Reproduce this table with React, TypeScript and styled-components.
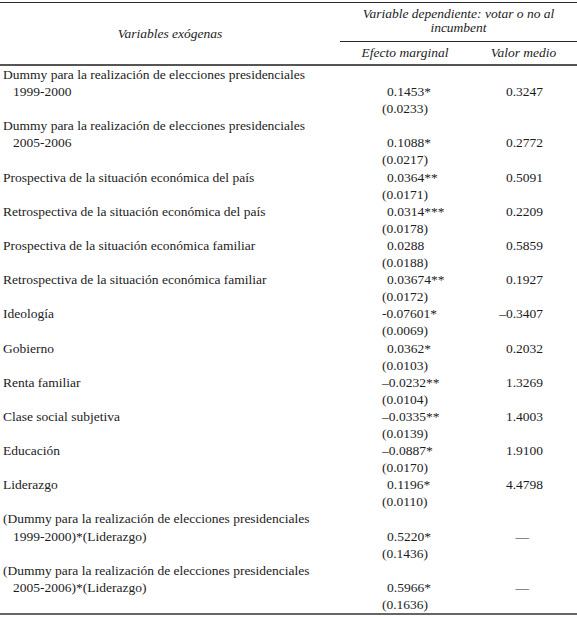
import React from 'react'
import styled, { createGlobalStyle } from 'styled-components'

const GlobalStyle = createGlobalStyle`
    html, body {
        margin:0;
        padding:0;
        background:#fff;
    }
    body {
        font-family:"Liberation Serif", "Times New Roman", serif;
        color:#1c1c1c;
    }
`

const Table = styled.div`
    width:577px;
    padding-top:2px;
    font-size:13.5px;
`

const Head = styled.div`
    display:grid;
    grid-template-columns:340px 130px 1fr;
    border-top:1px solid #2a2a2a;
    border-bottom:2px solid #555;
    font-style:italic;
`

const StubHead = styled.div`
    grid-row:1 / span 2;
    display:flex;
    align-items:center;
    justify-content:center;
`

const SpanHead = styled.div`
    grid-column:2 / span 2;
    text-align:center;
    line-height:14px;
    padding:4px 0 6px;
    border-bottom:1px solid #2a2a2a;
`

const SubHead = styled.div`
    text-align:center;
    line-height:22px;
`

const Body = styled.div`
    border-bottom:2px solid #666;
`

const Row = styled.div`
    display:grid;
    grid-template-columns:340px 130px 1fr;
    line-height:17.1px;
`

const Label = styled.div`
    padding-left:3px;
    white-space:nowrap;
`

const LabelLine = styled.div<{ $indent: boolean }>`
    padding-left:${p => p.$indent ? 10 : 0}px;
`

const Effect = styled.div<{ $offset: number }>`
    padding-top:${p => p.$offset * 17.1}px;
    padding-left:42px;
    white-space:nowrap;
`

const Estimate = styled.div<{ $signed: boolean }>`
    padding-left:${p => p.$signed ? 0 : 5}px;
`

const Mean = styled.div<{ $offset: number, $dash: boolean }>`
    padding-top:${p => p.$offset * 17.1}px;
    padding-right:${p => p.$dash ? 48 : 34}px;
    text-align:right;
`

interface IRow {
    label: string[]
    estimate: string
    se: string
    mean: string
}

const DUMMY = 'Dummy para la realización de elecciones presidenciales'

const rows: IRow[] = [
    { label: [DUMMY, '1999-2000'], estimate: '0.1453*', se: '(0.0233)', mean: '0.3247' },
    { label: [DUMMY, '2005-2006'], estimate: '0.1088*', se: '(0.0217)', mean: '0.2772' },
    { label: ['Prospectiva de la situación económica del país'], estimate: '0.0364**', se: '(0.0171)', mean: '0.5091' },
    { label: ['Retrospectiva de la situación económica del país'], estimate: '0.0314***', se: '(0.0178)', mean: '0.2209' },
    { label: ['Prospectiva de la situación económica familiar'], estimate: '0.0288', se: '(0.0188)', mean: '0.5859' },
    { label: ['Retrospectiva de la situación económica familiar'], estimate: '0.03674**', se: '(0.0172)', mean: '0.1927' },
    { label: ['Ideología'], estimate: '-0.07601*', se: '(0.0069)', mean: '–0.3407' },
    { label: ['Gobierno'], estimate: '0.0362*', se: '(0.0103)', mean: '0.2032' },
    { label: ['Renta familiar'], estimate: '–0.0232**', se: '(0.0104)', mean: '1.3269' },
    { label: ['Clase social subjetiva'], estimate: '–0.0335**', se: '(0.0139)', mean: '1.4003' },
    { label: ['Educación'], estimate: '–0.0887*', se: '(0.0170)', mean: '1.9100' },
    { label: ['Liderazgo'], estimate: '0.1196*', se: '(0.0110)', mean: '4.4798' },
    { label: ['(' + DUMMY, '1999-2000)*(Liderazgo)'], estimate: '0.5220*', se: '(0.1436)', mean: '—' },
    { label: ['(' + DUMMY, '2005-2006)*(Liderazgo)'], estimate: '0.5966*', se: '(0.1636)', mean: '—' },
]

const App: React.FC = () => {
    return <>
        <GlobalStyle />
        <Table>
            <Head>
                <StubHead>Variables exógenas</StubHead>
                <SpanHead>
                    Variable dependiente: votar o no al<br />incumbent
                </SpanHead>
                <SubHead>Efecto marginal</SubHead>
                <SubHead>Valor medio</SubHead>
            </Head>
            <Body>
                {rows.map((row, i) => {
                    const offset = row.label.length - 1
                    const signed = row.estimate[0] !== '0'
                    return <Row key={i}>
                        <Label>
                            {row.label.map((line, j) => (
                                <LabelLine key={j} $indent={j > 0}>{line}</LabelLine>
                            ))}
                        </Label>
                        <Effect $offset={offset}>
                            <Estimate $signed={signed}>{row.estimate}</Estimate>
                            <div>{row.se}</div>
                        </Effect>
                        <Mean $offset={offset} $dash={row.mean === '—'}>{row.mean}</Mean>
                    </Row>
                })}
            </Body>
        </Table>
    </>
}

export default App
